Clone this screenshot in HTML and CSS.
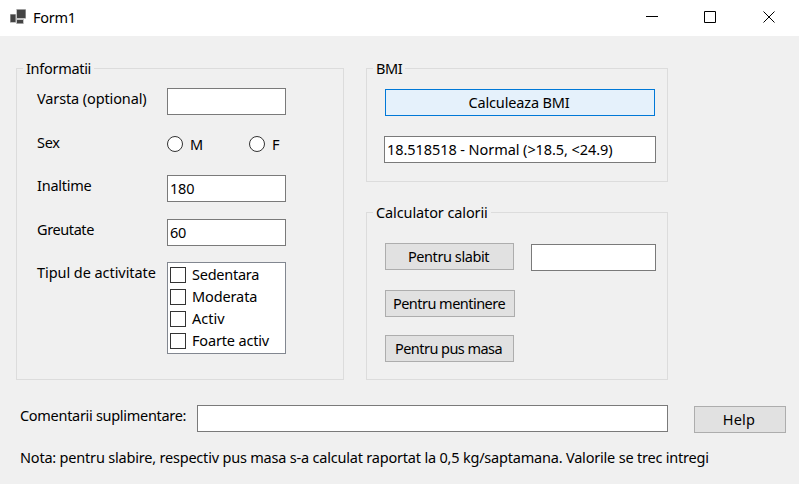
FILE: index.html
```html
<!DOCTYPE html>
<html lang="ro">
<head>
<meta charset="utf-8">
<title>Form1</title>
<link rel="stylesheet" href="styles.css">
</head>
<body>
<div class="window">
  <header class="titlebar">
    <svg class="app-icon" width="18" height="17" viewBox="0 0 18 17">
      <g fill="#c4c4c4"><rect x="1" y="5" width="6" height="9"/><rect x="7" y="0" width="10" height="10"/><rect x="7" y="10" width="8" height="5"/></g>
      <g fill="#434343"><rect x="1.500" y="5.500" width="5" height="7.500"/><rect x="8" y="0.700" width="8.500" height="8.300"/><rect x="8" y="11" width="6" height="3.300"/></g>
    </svg>
    <span class="title">Form1</span>
    <svg class="controls" width="144" height="36" viewBox="0 0 144 36" fill="none" stroke="#000" stroke-width="1">
      <path d="M1 16.500h12M59.500 11.500h11v11h-11z"/><path d="M118.500 11.500l11 11M129.500 11.500l-11 11"/>
    </svg>
  </header>
  <main class="content">
    <div class="groups">
      <fieldset class="group info">
        <legend><span class="t-info">Informatii</span></legend>
        <div class="fields">
          <span class="label t-varsta">Varsta (optional)</span><div class="box"></div>
          <span class="label t-sex">Sex</span>
          <div class="radios"><span class="radio"><i class="circle"></i>M</span><span class="radio"><i class="circle"></i>F</span></div>
          <span class="label t-inaltime">Inaltime</span><div class="box"><span class="t-num">180</span></div>
          <span class="label t-greutate">Greutate</span><div class="box"><span class="t-num">60</span></div>
          <span class="label t-tipul">Tipul de activitate</span>
          <div class="list">
            <div class="item"><i class="check"></i><span class="t-sed">Sedentara</span></div>
            <div class="item"><i class="check"></i><span class="t-mod">Moderata</span></div>
            <div class="item"><i class="check"></i><span class="t-act">Activ</span></div>
            <div class="item"><i class="check"></i><span class="t-foa">Foarte activ</span></div>
          </div>
        </div>
      </fieldset>
      <div class="right">
        <fieldset class="group bmi">
          <legend><span class="t-bmi">BMI</span></legend>
          <div class="button focused"><span class="t-calc">Calculeaza BMI</span></div>
          <div class="box result"><span class="t-result">18.518518 - Normal (&gt;18.5, &lt;24.9)</span></div>
        </fieldset>
        <fieldset class="group calories">
          <legend><span class="t-cal">Calculator calorii</span></legend>
          <div class="first"><div class="button"><span class="t-slabit">Pentru slabit</span></div><div class="box kcal"></div></div>
          <div class="button mentinere"><span class="t-ment">Pentru mentinere</span></div>
          <div class="button masa"><span class="t-masa">Pentru pus masa</span></div>
        </fieldset>
      </div>
    </div>
    <div class="comments">
      <span class="clabel"><span class="t-com">Comentarii suplimentare:</span></span><div class="box comment"></div><div class="button help"><span class="t-help">Help</span></div>
    </div>
    <p class="note"><span class="t-nota">Nota: pentru slabire, respectiv pus masa s-a calculat raportat la 0,5 kg/saptamana. Valorile se trec intregi</span></p>
  </main>
</div>
</body>
</html>
```

FILE: styles.css
```css
* { box-sizing: border-box; }
body {
  margin: 0;
  font: 14.5px/20px "Noto Sans", "Open Sans", sans-serif;
  color: #000;
  background: #f0f0f0;
}
.window { width: 799px; height: 484px; overflow: hidden; background: #f0f0f0; white-space: nowrap; }
.titlebar { display: flex; height: 36px; background: #fff; }
.app-icon { margin: 9px 0 0 9px; }
.title { margin: 7px auto 0 6px; letter-spacing: -0.3px; }
.controls { margin-right: 10px; }
.content { padding: 22px 0 0 16px; }
.groups { display: flex; gap: 22px; }
.group { margin: 0; min-width: 0; padding: 0; border: 1px solid #dcdcdc; }
.group legend { margin-left: 6px; padding: 0 3px; height: 20px; }
.info { width: 328px; height: 322px; }
.fields {
  display: grid;
  grid-template-columns: 130px 119px;
  grid-template-rows: 44px 43px 44px 43px 92px;
  padding: 10px 0 0 20px;
}
.label { align-self: start; }
.box { height: 27px; padding: 2px 0 0 2px; border: 1px solid #7a7a7a; background: #fff; }
.info .box { width: 119px; }
.radios { display: flex; padding-top: 4px; }
.radio { display: flex; flex: none; align-items: center; width: 82px; height: 16px; gap: 7px; }
.circle { width: 16px; height: 16px; border: 1px solid #333; border-radius: 50%; background: #fff; }
.list { width: 119px; height: 92px; padding: 1px 2px; border: 1px solid #828790; background: #fff; }
.item { display: flex; align-items: flex-start; gap: 6px; height: 22px; }
.check { width: 16px; height: 16px; margin-top: 3px; border: 1px solid #333; background: #fff; }
.right { display: flex; flex-direction: column; width: 302px; gap: 20px; }
.bmi { height: 124px; }
.calories { height: 178px; }
.button { width: 129px; height: 27px; padding: 2px 2px 0 0; border: 1px solid #adadad; background: #e1e1e1; text-align: center; }
.focused { width: 270px; margin: 11px 0 0 18px; border-color: #0078d7; background: #e5f1fb; }
.result { width: 272px; margin: 20px 0 0 17px; }
.first { display: flex; margin: 21px 0 0 18px; }
.kcal { width: 125px; margin: 1px 0 0 17px; }
.mentinere { width: 130px; margin: 19px 0 0 18px; }
.masa { margin: 18px 0 0 18px; }
.comments { display: flex; height: 28px; margin-top: 25px; padding-left: 4px; }
.clabel { width: 177px; }
.comment { width: 471px; }
.help { width: 92px; margin: 1px 0 0 26px; }
.note { margin: 14px 0 0 4px; }

/* Tracking per caption, close to the native UI font's widths */
.t-info { letter-spacing: -0.3px; }
.t-varsta { letter-spacing: -0.12px; }
.t-sex { letter-spacing: -0.3px; }
.t-inaltime { letter-spacing: -0.25px; }
.t-greutate { letter-spacing: -0.4px; }
.t-tipul { letter-spacing: -0.06px; }
.t-num { letter-spacing: -0.2px; }
.t-sed { letter-spacing: -0.25px; }
.t-mod { letter-spacing: -0.12px; }
.t-foa { letter-spacing: -0.17px; }
.t-bmi { letter-spacing: -0.4px; }
.t-calc { letter-spacing: -0.15px; }
.t-result { letter-spacing: -0.07px; }
.t-cal { letter-spacing: -0.11px; }
.t-slabit { letter-spacing: -0.42px; }
.t-ment { letter-spacing: -0.52px; }
.t-masa { letter-spacing: -0.55px; }
.t-com { letter-spacing: -0.3px; }
.t-help { letter-spacing: 0.2px; }
.t-nota { letter-spacing: -0.2px; }
```
